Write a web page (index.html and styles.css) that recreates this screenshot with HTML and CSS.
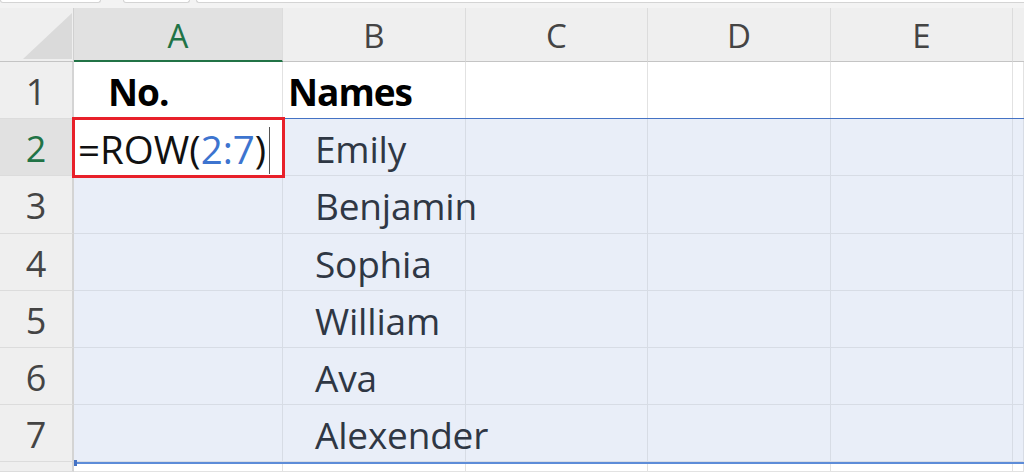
FILE: index.html
```html
<!DOCTYPE html>
<html>
<head>
<meta charset="utf-8">
<link rel="stylesheet" href="styles.css">
</head>
<body>
<div class="sheet">
  <div class="topbar">
    <div class="tbox namebox"></div>
    <div class="tbox fxbox"></div>
    <div class="tbox formulabox"></div>
  </div>
  <div class="grid">
    <div class="ch corner"></div>
    <div class="ch active-col">A</div>
    <div class="ch">B</div>
    <div class="ch">C</div>
    <div class="ch">D</div>
    <div class="ch">E</div>
    <div class="ch last"></div>

    <div class="rh">1</div>
    <div class="cell bold pad-no">No.</div>
    <div class="cell bold pad-b">Names</div>
    <div class="cell"></div>
    <div class="cell"></div>
    <div class="cell"></div>
    <div class="cell"></div>

    <div class="rh active-row">2</div>
    <div class="cell sel active"><span class="f">=ROW(</span><span class="ref">2:7</span><span class="f">)</span><span class="caret"></span></div>
    <div class="cell sel text pad-name">Emily</div>
    <div class="cell sel"></div>
    <div class="cell sel"></div>
    <div class="cell sel"></div>
    <div class="cell sel"></div>

    <div class="rh">3</div>
    <div class="cell sel"></div>
    <div class="cell sel text pad-name">Benjamin</div>
    <div class="cell sel"></div>
    <div class="cell sel"></div>
    <div class="cell sel"></div>
    <div class="cell sel"></div>

    <div class="rh">4</div>
    <div class="cell sel"></div>
    <div class="cell sel text pad-name">Sophia</div>
    <div class="cell sel"></div>
    <div class="cell sel"></div>
    <div class="cell sel"></div>
    <div class="cell sel"></div>

    <div class="rh">5</div>
    <div class="cell sel"></div>
    <div class="cell sel text pad-name">William</div>
    <div class="cell sel"></div>
    <div class="cell sel"></div>
    <div class="cell sel"></div>
    <div class="cell sel"></div>

    <div class="rh">6</div>
    <div class="cell sel"></div>
    <div class="cell sel text pad-name">Ava</div>
    <div class="cell sel"></div>
    <div class="cell sel"></div>
    <div class="cell sel"></div>
    <div class="cell sel"></div>

    <div class="rh">7</div>
    <div class="cell sel"></div>
    <div class="cell sel text pad-name">Alexender</div>
    <div class="cell sel"></div>
    <div class="cell sel"></div>
    <div class="cell sel"></div>
    <div class="cell sel"></div>

    <div class="rh"></div>
    <div class="cell"></div>
    <div class="cell"></div>
    <div class="cell"></div>
    <div class="cell"></div>
    <div class="cell"></div>
    <div class="cell"></div>

    <div class="range"><span class="handle"></span></div>
  </div>
</div>
</body>
</html>
```

FILE: styles.css
```css
* { box-sizing: border-box; }
html, body { margin: 0; padding: 0; }
body {
  width: 1024px;
  height: 472px;
  overflow: hidden;
  background: #ffffff;
  font-family: "Open Sans", "Noto Sans", sans-serif;
}
.sheet { display: flex; flex-direction: column; height: 472px; }

.topbar {
  height: 8px;
  background: #f3f3f3;
  display: flex;
  align-items: flex-start;
}
.tbox {
  height: 3px;
  background: #ffffff;
  border: 1px solid #d4d4d4;
  border-top: none;
  border-radius: 0 0 4px 4px;
}
.namebox { width: 101px; }
.fxbox { width: 67px; margin-left: 22px; }
.formulabox { flex: 1; margin-left: 6px; border-right: none; border-radius: 0 0 0 4px; }

.grid {
  position: relative;
  flex: 1;
  display: grid;
  grid-template-columns: 74px 209px 183px 182px 183px 182px 1fr;
  grid-template-rows: 54px repeat(7, 57.2px) 1fr;
}

.ch {
  background: #efefef;
  border-right: 1px solid #dcdcdc;
  border-bottom: 1px solid #c4c4c4;
  color: #444444;
  font-size: 33px;
  line-height: 50px;
  text-align: center;
  padding-top: 3px;
}
.ch.last { border-right: none; }
.ch.active-col {
  background: #e1e1e1;
  color: #217346;
  border-bottom: 2px solid #217346;
}
.corner {
  position: relative;
  border-right: 1px solid #d0d0d0;
}
.corner::after {
  content: "";
  position: absolute;
  left: 23px;
  top: 5px;
  width: 49px;
  height: 46px;
  background: #dadada;
  clip-path: polygon(0 100%, 100% 0, 100% 100%);
}

.rh {
  background: #efefef;
  border-right: 2px solid #d4d4d4;
  border-bottom: 1px solid #dcdcdc;
  color: #444444;
  font-size: 36px;
  line-height: 54px;
  padding-top: 3px;
  text-align: center;
}
.rh.active-row {
  background: #e1e1e1;
  color: #217346;
}

.cell {
  border-right: 1px solid #e2e2e2;
  border-bottom: 1px solid #e2e2e2;
  font-size: 37px;
  line-height: 54px;
  padding-top: 3px;
  white-space: nowrap;
  color: #000000;
}
.cell.text, .cell.bold {
  position: relative;
  z-index: 1;
}
.cell.sel {
  background: #e9eef8;
  border-right-color: #d7dce5;
  border-bottom-color: #d7dce5;
  color: #2f3744;
}
.bold { font-weight: 700; letter-spacing: -1px; }
.pad-no { padding-left: 34px; }
.pad-b { padding-left: 5px; }
.pad-name { padding-left: 32px; letter-spacing: -0.2px; }

.cell.active {
  position: relative;
  z-index: 3;
  background: #ffffff;
  outline: 3px solid #e8202a;
  outline-offset: -1px;
  padding-left: 4px;
  font-size: 38.5px;
  color: #000000;
}
.f { color: #111111; }
.ref { color: #3d74cf; }
.caret {
  display: inline-block;
  width: 1px;
  height: 47px;
  background: #555555;
  margin-left: 3px;
  vertical-align: -10px;
}

.range {
  position: absolute;
  left: 74px;
  right: 0;
  top: 110px;
  height: 346px;
  border-top: 1px solid #4472c4;
  border-bottom: 2px solid #5d8cd8;
  pointer-events: none;
  z-index: 2;
}
.handle {
  position: absolute;
  left: 0;
  bottom: -4px;
  width: 3px;
  height: 6px;
  background: #4472c4;
}
```
